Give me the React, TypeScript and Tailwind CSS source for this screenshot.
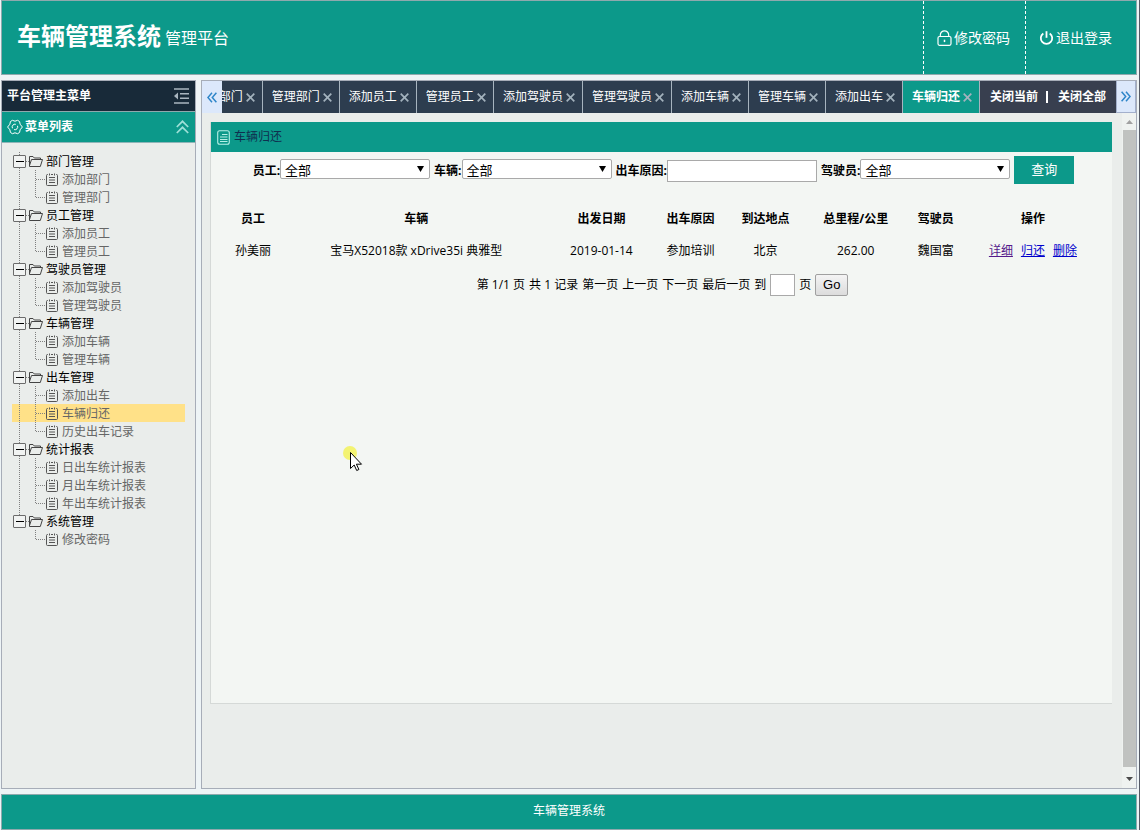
import { useState } from 'react';
import type { ReactNode } from 'react';

interface MenuGroup {
  name: string;
  items: string[];
}

const menuGroups: MenuGroup[] = [
  { name: '部门管理', items: ['添加部门', '管理部门'] },
  { name: '员工管理', items: ['添加员工', '管理员工'] },
  { name: '驾驶员管理', items: ['添加驾驶员', '管理驾驶员'] },
  { name: '车辆管理', items: ['添加车辆', '管理车辆'] },
  { name: '出车管理', items: ['添加出车', '车辆归还', '历史出车记录'] },
  { name: '统计报表', items: ['日出车统计报表', '月出车统计报表', '年出车统计报表'] },
  { name: '系统管理', items: ['修改密码'] },
];

const tabs = [
  '添加部门',
  '管理部门',
  '添加员工',
  '管理员工',
  '添加驾驶员',
  '管理驾驶员',
  '添加车辆',
  '管理车辆',
  '添加出车',
  '车辆归还',
];

const columns = [
  { title: '员工', width: 'w-[62px]' },
  { title: '车辆', width: 'w-[264px]' },
  { title: '出发日期', width: 'w-[106px]' },
  { title: '出车原因', width: 'w-[72px]' },
  { title: '到达地点', width: 'w-[78px]' },
  { title: '总里程/公里', width: 'w-[102px]' },
  { title: '驾驶员', width: 'w-[58px]' },
  { title: '操作', width: 'w-[136px]' },
];

const records = [
  ['孙美丽', '宝马X52018款 xDrive35i 典雅型', '2019-01-14', '参加培训', '北京', '262.00', '魏国富'],
];

const pagerTexts = ['第 1/1 页', '共 1 记录', '第一页', '上一页', '下一页', '最后一页'];

function LockIcon() {
  return (
    <svg className="h-4 w-[15px]" viewBox="0 0 15 16" fill="none" stroke="currentColor" strokeWidth={1.2}>
      <rect x="1" y="6.5" width="13" height="8.8" rx="1.5" />
      <path d="M3.300 6.500V5a4.200 4.200 0 0 1 8.400 0v1.500" />
      <path d="M7.500 9.700v2.400" strokeWidth={1.5} />
    </svg>
  );
}

function PowerIcon() {
  return (
    <svg className="h-4 w-[15px]" viewBox="0 0 15 16" fill="none" stroke="currentColor" strokeWidth={1.8}>
      <path d="M4.300 3.400a5.700 5.700 0 1 0 6.400 0" />
      <path d="M7.500 1.200v6.600" />
    </svg>
  );
}

function GearIcon() {
  return (
    <svg className="h-4 w-4" viewBox="0 0 16 16" fill="none" stroke="currentColor" strokeWidth={1}>
      <path
        d="M5.400 1.300 8 2.200l2.600-.9 2 1.300.5 2.600L15.400 8l-2.300 2.800-.5 2.600-2 1.300-2.600-.9-2.600.9-2-1.300-.5-2.600L.6 8l2.300-2.800.5-2.600z"
        strokeLinejoin="round"
      />
      <path d="M5.500 9.300A2.800 2.800 0 0 1 8.800 5.300M10.500 6.800a2.800 2.800 0 0 1-3.400 3.800" />
    </svg>
  );
}

function IndentIcon() {
  return (
    <svg className="h-4 w-[17px]" viewBox="0 0 17 16" fill="none" stroke="currentColor" strokeWidth={1.5}>
      <path d="M1 1h15M7 5.700h9M7 10.300h9M1 15h15" />
      <path d="M5 4.500v7L1 8z" fill="currentColor" stroke="none" />
    </svg>
  );
}

function ChevronsUpIcon() {
  return (
    <svg className="h-[14px] w-[13px]" viewBox="0 0 13 14" fill="none" stroke="currentColor" strokeWidth={1.7}>
      <path d="M.8 7 6.500 1.300 12.200 7M.8 13l5.700-5.700 5.700 5.700" />
    </svg>
  );
}

function PageIcon() {
  return (
    <svg className="h-[15px] w-[13px]" viewBox="0 0 13 15" fill="none" stroke="currentColor" strokeWidth={1.1}>
      <rect x=".7" y=".7" width="11.6" height="13.6" rx="2" />
      <path d="M5 4.500h5.500M3 7h7.500M3 9.500h7.500M3 11.500h7.500" />
    </svg>
  );
}

function CloseIcon() {
  return (
    <svg className="h-[9px] w-[9px]" viewBox="0 0 9 9" fill="none" stroke="currentColor" strokeWidth={1.7}>
      <path d="M.7.7l7.600 7.600M8.300.7.7 8.300" />
    </svg>
  );
}

function DoubleArrow({ direction }: { direction: 'left' | 'right' }) {
  return (
    <svg
      className={`h-[11px] w-[10px] ${direction === 'right' ? 'rotate-180' : ''}`}
      viewBox="0 0 10 11"
      fill="none"
      stroke="#2f86c9"
      strokeWidth={1.5}
    >
      <path d="M5 .8.9 5.500 5 10.200M9.400.8 5.300 5.500l4.100 4.700" />
    </svg>
  );
}

// Expander box and open folder, with the dotted trunk running behind
function FolderMark({ last }: { last: boolean }) {
  return (
    <svg className="h-[18px] w-[34px] shrink-0" viewBox="0 0 34 18" fill="none">
      <path
        d={last ? 'M7.5 0v4M14 9.5h3' : 'M7.5 0v18M14 9.5h3'}
        stroke="#808080"
        strokeDasharray="1 1"
        shapeRendering="crispEdges"
      />
      <rect x="1.5" y="3.5" width="12" height="12" rx=".5" fill="#f1f3f2" stroke="#6b6b6b" />
      <path d="M4 9.5h8" stroke="#000" shapeRendering="crispEdges" />
      <path
        d="M28.500 7.500v-1.500h-6.200L21 4.500h-3.500v10h10.800l2.200-7H19.500l-2 6"
        stroke="#444"
        strokeLinejoin="round"
      />
    </svg>
  );
}

// Dotted branch plus the clipboard in front of a leaf
function LeafMark({ trunk, last }: { trunk: boolean; last: boolean }) {
  return (
    <svg className="h-[18px] w-[50px] shrink-0" viewBox="0 0 50 18" fill="none">
      <g stroke="#808080" strokeDasharray="1 1" shapeRendering="crispEdges">
        {trunk && <path d="M7.5 0v18" />}
        <path d={last ? 'M23.5 0v10' : 'M23.5 0v18'} />
        <path d="M24 9.5h9" />
      </g>
      <g stroke="#555">
        <path d="M36 4.500h-.5q-1 0-1 1v9q0 1 1 1h9q1 0 1-1v-9q0-1-1-1h-.5" />
        <path d="M37.500 3.500v2M42.500 3.500v2M39 4.500h2M37 7.500h6M37 10h6M37 12.500h6" />
      </g>
    </svg>
  );
}

function Header() {
  return (
    <header className="flex h-[75px] border border-[#8fa9ad] bg-[#0c998a] text-white">
      <div className="flex flex-1 items-center gap-1 pb-1 pl-[15px]">
        <h1 className="text-2xl font-bold">车辆管理系统</h1>
        <span className="pt-1 text-base">管理平台</span>
      </div>
      <a href="#password" className="flex items-center gap-[2px] border-l border-dashed border-white pr-[15px] pl-[13px] text-sm">
        <LockIcon />
        修改密码
      </a>
      <a href="#logout" className="flex items-center gap-[2px] border-l border-dashed border-white pr-6 pl-[13px] text-sm">
        <PowerIcon />
        退出登录
      </a>
    </header>
  );
}

function Sidebar({ current, onSelect }: { current: string; onSelect: (name: string) => void }) {
  return (
    <aside className="w-[195px] shrink-0 border border-[#a7adb8] bg-[#eaedeb]">
      <div className="flex h-[31px] items-center justify-between border-b border-[#8fa9ad] bg-[#182a39] pr-[5px] pl-[5px] font-bold text-white">
        平台管理主菜单
        <button type="button" aria-label="收起菜单" className="text-[#a9b6c0]">
          <IndentIcon />
        </button>
      </div>
      <div className="flex h-[31px] items-center gap-[2px] border-b border-[#8fb5b8] bg-[#0c998a] pr-[6px] pl-[5px] font-bold text-white">
        <GearIcon />
        <span className="flex-1">菜单列表</span>
        <button type="button" aria-label="折叠列表" className="text-[#9fe0d8]">
          <ChevronsUpIcon />
        </button>
      </div>
      <nav className="px-[10px] pt-[9px] leading-5">
        <ul>
          {menuGroups.map((group, g) => {
            const lastGroup = g === menuGroups.length - 1;
            return (
              <li key={group.name}>
                <div className="flex h-[18px] text-black">
                  <FolderMark last={lastGroup} />
                  {group.name}
                </div>
                <ul>
                  {group.items.map((item, i) => (
                    <li key={item}>
                      <a
                        href="#menu"
                        onClick={() => onSelect(item)}
                        className={`flex h-[18px] text-[#666] ${current === item ? 'bg-[#ffe188]' : ''}`}
                      >
                        <LeafMark trunk={!lastGroup} last={i === group.items.length - 1} />
                        {item}
                      </a>
                    </li>
                  ))}
                </ul>
              </li>
            );
          })}
        </ul>
      </nav>
    </aside>
  );
}

function TabBar({ current, onSelect }: { current: string; onSelect: (name: string) => void }) {
  return (
    <div className="flex h-8 bg-[#2d3d4f] text-white">
      <button type="button" aria-label="向左滚动" className="flex w-5 shrink-0 items-center justify-center bg-[#dce8fb]">
        <DoubleArrow direction="left" />
      </button>
      <div className="flex min-w-0 flex-1 justify-end overflow-hidden">
        {tabs.map((tab) => (
          <div
            key={tab}
            className={`flex shrink-0 items-center gap-[3px] border-r border-[#a7b4bf] pr-[7px] pl-[9px] ${
              current === tab ? 'bg-[#0c998a] font-bold' : ''
            }`}
          >
            <button type="button" onClick={() => onSelect(tab)}>
              {tab}
            </button>
            <button type="button" aria-label={`关闭${tab}`} className="text-[#a3b2bd]">
              <CloseIcon />
            </button>
          </div>
        ))}
      </div>
      <div className="flex shrink-0 items-center gap-2 bg-[#383f4f] px-[10px] font-bold">
        <button type="button">关闭当前</button>
        <span className="h-3 w-1 border-l-2 border-white" />
        <button type="button">关闭全部</button>
      </div>
      <button
        type="button"
        aria-label="向右滚动"
        className="flex w-5 shrink-0 items-center justify-center border-x border-b border-[#a3b0cc] bg-[#dce8fb]"
      >
        <DoubleArrow direction="right" />
      </button>
    </div>
  );
}

function SelectField({ id, label }: { id: string; label: string }) {
  return (
    <div className="flex items-center pb-[2px]">
      <label htmlFor={id} className="pt-1 font-bold">
        {label}:
      </label>
      <div className="relative">
        <select id={id} className="block h-5 w-[150px] appearance-none rounded-xs border border-[#a9a9a9] bg-white pl-1 text-[13px] leading-5">
          <option>全部</option>
        </select>
        <svg className="pointer-events-none absolute top-[7px] right-[6px] h-[6px] w-[7px]" viewBox="0 0 7 6">
          <path d="M0 0h7L3.500 6z" fill="#000" />
        </svg>
      </div>
    </div>
  );
}

function SearchForm() {
  return (
    <form onSubmit={(e) => e.preventDefault()} className="flex h-9 items-center justify-center gap-1 pl-1">
      <SelectField id="employee" label="员工" />
      <SelectField id="car" label="车辆" />
      <div className="flex items-center pt-[2px]">
        <label htmlFor="reason" className="font-bold">
          出车原因:
        </label>
        <input id="reason" type="text" className="h-[22px] w-[150px] border border-[#a9a9a9] bg-white px-1" />
      </div>
      <SelectField id="driver" label="驾驶员" />
      <button type="submit" className="h-7 w-[60px] bg-[#0c998a] text-[13px] text-white">
        查询
      </button>
    </form>
  );
}

function ActionLink({ children, visited }: { children: ReactNode; visited?: boolean }) {
  return (
    <a href="#record" className={`underline ${visited ? 'text-[#551a8b]' : 'text-[#0000cc]'}`}>
      {children}
    </a>
  );
}

function RecordTable() {
  return (
    <div className="px-[11px] pt-[15px]">
      <table className="w-full table-fixed text-center">
        <colgroup>
          {columns.map((column) => (
            <col key={column.title} className={column.width} />
          ))}
        </colgroup>
        <thead>
          <tr className="h-8">
            {columns.map((column) => (
              <th key={column.title}>{column.title}</th>
            ))}
          </tr>
        </thead>
        <tbody>
          {records.map((record) => (
            <tr key={record[0]} className="h-8">
              {record.map((value) => (
                <td key={value}>{value}</td>
              ))}
              <td>
                <div className="flex justify-center gap-2">
                  <ActionLink visited>详细</ActionLink>
                  <ActionLink>归还</ActionLink>
                  <ActionLink>删除</ActionLink>
                </div>
              </td>
            </tr>
          ))}
        </tbody>
      </table>
    </div>
  );
}

function Pager() {
  return (
    <div className="flex h-9 items-center justify-center gap-1 pl-[2px]">
      {pagerTexts.map((text) => (
        <span key={text}>{text}</span>
      ))}
      <label htmlFor="page">到</label>
      <input id="page" type="text" className="h-[22px] w-[25px] border border-[#a9a9a9] bg-white px-1" />
      <span>页</span>
      <button
        type="button"
        className="h-[22px] w-[33px] rounded-xs border border-[#a0a0a0] bg-linear-to-b from-[#f4f4f4] to-[#dcdcdc] font-['Liberation_Sans',sans-serif] text-[13px]"
      >
        Go
      </button>
    </div>
  );
}

function ScrollBar() {
  return (
    <div className="flex w-[14px] shrink-0 flex-col items-center bg-[#eff2f0]">
      <svg className="h-[17px] w-[7px]" viewBox="0 0 7 17">
        <path d="M0 11h7L3.500 7z" fill="#a0a0a0" />
      </svg>
      <div className="w-[13px] flex-1 bg-[#c0c2c0]" />
      <svg className="h-[21px] w-[7px]" viewBox="0 0 7 21">
        <path d="M0 10h7l-3.500 4z" fill="#4a4a4a" />
      </svg>
    </div>
  );
}

export default function App() {
  const [current, setCurrent] = useState('车辆归还');

  return (
    <div className="flex min-h-screen flex-col gap-[5px] border-r border-[#555a66] bg-[#eef4f6] pr-[2px] pl-px font-['Open_Sans','Noto_Sans_CJK_SC',sans-serif] text-xs text-black">
      <Header />
      <div className="flex flex-1 gap-[5px]">
        <Sidebar current={current} onSelect={setCurrent} />
        <main className="flex min-w-0 flex-1 flex-col border border-[#a7adb8] bg-[#eaedeb]">
          <TabBar current={current} onSelect={setCurrent} />
          <div className="flex flex-1">
            <div className="min-w-0 flex-1 pt-[9px] pr-[10px] pl-2">
              <section className="min-h-[582px] border-b border-l border-[#d5d9d7] bg-[#f3f6f3]">
                <h2 className="flex h-[30px] items-center gap-1 bg-[#0c998a] pl-[6px] text-[#0f2f4f]">
                  <span className="text-[#b5efe6]">
                    <PageIcon />
                  </span>
                  车辆归还
                </h2>
                <SearchForm />
                <RecordTable />
                <Pager />
              </section>
            </div>
            <ScrollBar />
          </div>
        </main>
      </div>
      <footer className="flex h-9 items-center justify-center border border-[#8fa9ad] bg-[#0c998a] pb-[2px] text-white">车辆管理系统</footer>
      {/* Pointer with its highlight spot */}
      <svg className="pointer-events-none absolute top-[444px] left-[341px] h-7 w-6" viewBox="0 0 24 28">
        <circle cx="9" cy="9" r="7" fill="#f2f25a" opacity=".85" />
        <path
          d="M9.500 8.500v16l3.700-3.500 2.500 5.500 2.200-1-2.500-5.300h5.100z"
          fill="#fff"
          stroke="#000"
          strokeWidth="1"
        />
      </svg>
    </div>
  );
}
